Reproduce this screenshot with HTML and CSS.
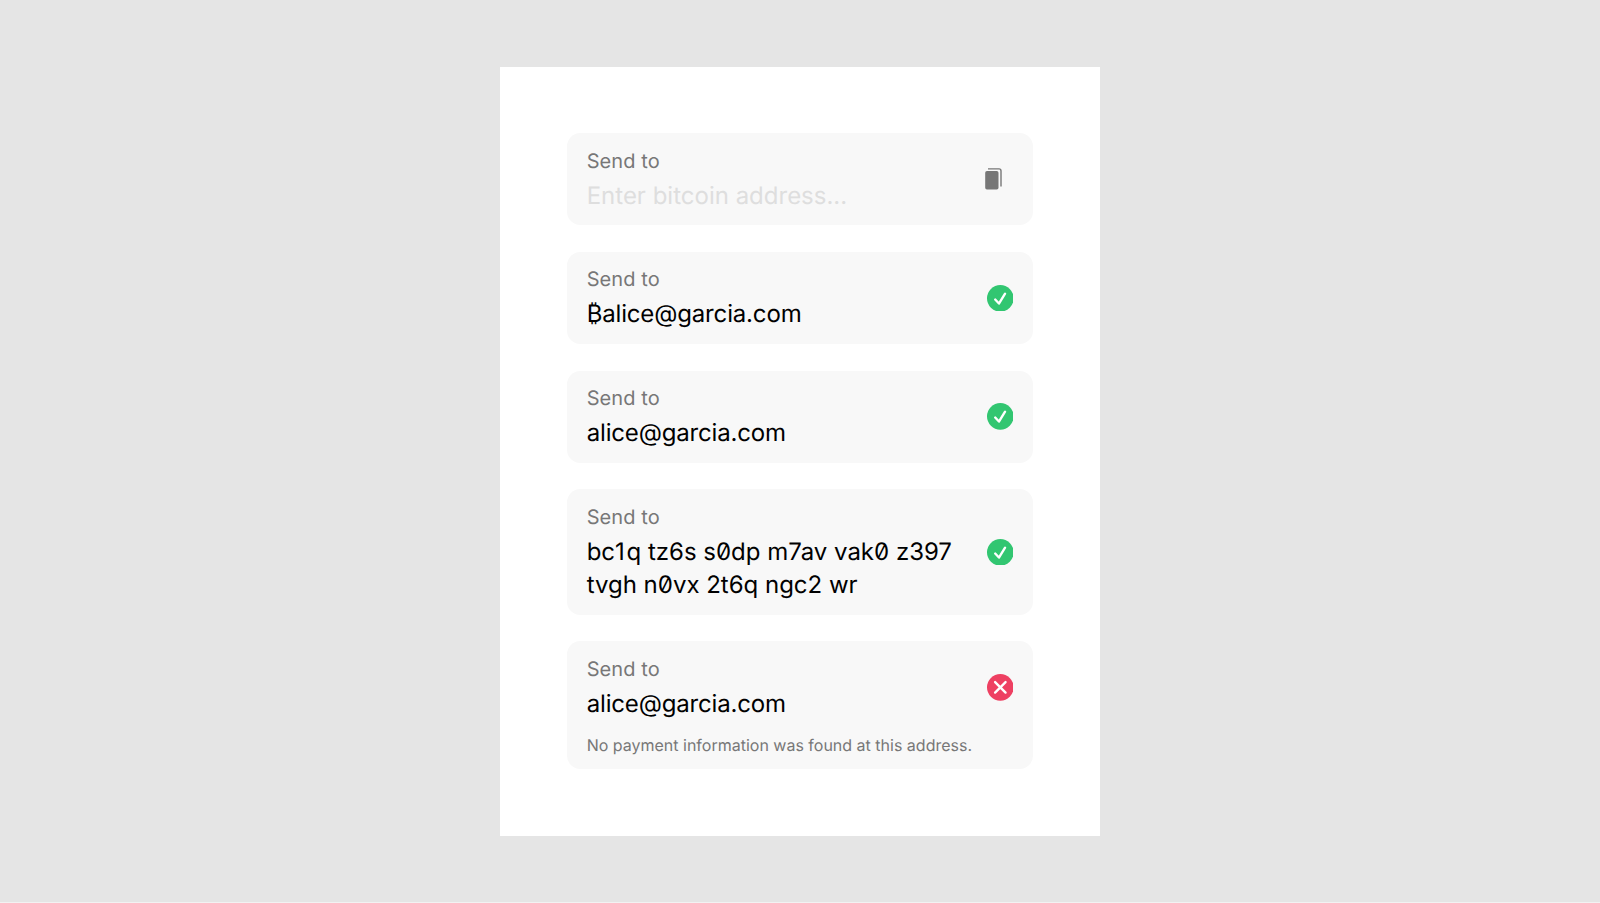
FILE: index.html
```html
<!DOCTYPE html>
<html lang="en">
<head>
<meta charset="utf-8">
<title>Send to</title>
<link rel="stylesheet" href="styles.css">
</head>
<body>
<main class="panel">
  <section class="field">
    <div class="text"><div class="label">Send to</div><div class="value placeholder">Enter bitcoin address...</div></div>
    <svg class="copy" viewBox="0 0 40 40"><path fill="#777" d="M12 12h9.700a1.800 1.800 0 0 1 1.800 1.800v15a1.800 1.800 0 0 1-1.800 1.800H12a1.800 1.800 0 0 1-1.800-1.800v-15a1.800 1.800 0 0 1 1.800-1.800z"/><path fill="none" stroke="#777" stroke-width="1.400" d="M13 9.900h11a2 2 0 0 1 2 2V27.600"/></svg>
  </section>
  <section class="field">
    <div class="text"><div class="label">Send to</div><div class="value email">₿alice@garcia.com</div></div>
    <svg class="status" viewBox="0 0 27 27"><circle cx="13.500" cy="13.500" r="13.500" fill="#32c671"/><path class="mark" d="M8.300 14.700l3.800 4.100 6.200-10"/></svg>
  </section>
  <section class="field">
    <div class="text"><div class="label">Send to</div><div class="value email">alice@garcia.com</div></div>
    <svg class="status" viewBox="0 0 27 27"><circle cx="13.500" cy="13.500" r="13.500" fill="#32c671"/><path class="mark" d="M8.300 14.700l3.800 4.100 6.200-10"/></svg>
  </section>
  <section class="field">
    <div class="text"><div class="label">Send to</div><div class="value address">bc<span class="one">1</span>q tz6s s0dp m7av vak0 z397<br>tvgh n0vx 2t6q ngc2 wr</div></div>
    <svg class="status" viewBox="0 0 27 27"><circle cx="13.500" cy="13.500" r="13.500" fill="#32c671"/><path class="mark" d="M8.300 14.700l3.800 4.100 6.200-10"/></svg>
  </section>
  <section class="field">
    <div class="text"><div class="label">Send to</div><div class="value email">alice@garcia.com</div></div>
    <svg class="status" viewBox="0 0 27 27"><circle cx="13.500" cy="13.500" r="13.500" fill="#ee4062"/><path class="mark" d="M8.200 8.200l10.600 10.600M18.800 8.200L8.200 18.800"/></svg>
    <p class="message">No payment information was found at this address.</p>
  </section>
</main>
</body>
</html>
```
FILE: styles.css
```css
* { box-sizing: border-box; }
body { margin: 0; height: 903px; padding-top: 66.67px; background: #e5e5e5; border-bottom: 1px solid #f2f2f2; font-family: Inter, sans-serif; text-rendering: geometricPrecision; }
.panel { width: 600px; margin: 0 auto; padding: 66.8px 66.67px 66.5px; background: #fff; display: flex; flex-direction: column; gap: 26.67px; }
.field { display: flex; flex-wrap: wrap; align-items: center; justify-content: space-between; padding: 13.33px 20px; border-radius: 13.33px; background: #f8f8f8; }
.label { font-size: 20px; line-height: 29px; color: #777; letter-spacing: 0.1px; }
.value { margin-top: 3px; font-size: 24px; line-height: 33.33px; color: #000; font-feature-settings: "zero"; white-space: nowrap; }
.email { letter-spacing: -0.16px; }
.address { letter-spacing: -0.01px; }
.one { letter-spacing: 1.7px; }
.placeholder { color: #dedede; }
.status { width: 26.67px; height: 26.67px; }
.copy { width: 40px; height: 40px; margin-right: -1.8px; }
.mark { fill: none; stroke: #fff; stroke-width: 2.4; stroke-linecap: round; stroke-linejoin: round; }
.message { width: 100%; margin: 14px 0 0; font-size: 16px; line-height: 22px; color: #777; }
```
